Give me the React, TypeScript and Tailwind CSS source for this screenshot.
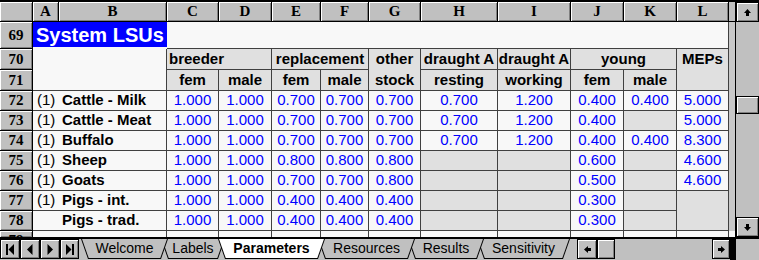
import React from 'react';

type Row = { n: number; p: boolean; name: string; v: (string | null)[]; lMerge?: boolean; lSkip?: boolean };

const rows: Row[] = [
  { n: 72, p: true, name: 'Cattle - Milk', v: ['1.000', '1.000', '0.700', '0.700', '0.700', '0.700', '1.200', '0.400', '0.400', '5.000'] },
  { n: 73, p: true, name: 'Cattle - Meat', v: ['1.000', '1.000', '0.700', '0.700', '0.700', '0.700', '1.200', '0.400', null, '5.000'] },
  { n: 74, p: true, name: 'Buffalo', v: ['1.000', '1.000', '0.700', '0.700', '0.700', '0.700', '1.200', '0.400', '0.400', '8.300'] },
  { n: 75, p: true, name: 'Sheep', v: ['1.000', '1.000', '0.800', '0.800', '0.800', null, null, '0.600', null, '4.600'] },
  { n: 76, p: true, name: 'Goats', v: ['1.000', '1.000', '0.700', '0.700', '0.800', null, null, '0.500', null, '4.600'] },
  { n: 77, p: true, name: 'Pigs - int.', v: ['1.000', '1.000', '0.400', '0.400', '0.400', null, null, '0.300', null], lMerge: true },
  { n: 78, p: false, name: 'Pigs - trad.', v: ['1.000', '1.000', '0.400', '0.400', '0.400', null, null, '0.300', null], lSkip: true },
];

const letters = ['A', 'B', 'C', 'D', 'E', 'F', 'G', 'H', 'I', 'J', 'K', 'L'];

const hdr =
  'bg-[#c0c0c0] border-r border-b border-black shadow-[inset_1px_1px_0_#ffffff,inset_-1px_-1px_0_#808080] flex items-center justify-center font-bold text-[15px] font-["Liberation_Serif",serif] text-black';
const numCell =
  'bg-[#f8f8f8] border-r border-b border-[#404040] flex items-center justify-center text-[#0000ff] text-[15px]';
const grayCell = 'bg-[#e0e0e0] border-r border-b border-[#404040]';
const label = 'bg-[#e0e0e0] border-r border-b border-[#404040] flex items-center font-bold text-[15px]';

const Arrow = ({ dir }: { dir: 'up' | 'down' | 'left' | 'right' }) => {
  const rot = { up: 0, right: 90, down: 180, left: 270 }[dir];
  return (
    <svg width="9" height="9" viewBox="0 0 9 9">
      <path d="M4.5 1 L8 5 H6 V8 H3 V5 H1 Z" fill="#000" transform={`rotate(${rot} 4.5 4.5)`} />
    </svg>
  );
};

const NavIcon = ({ kind }: { kind: 'first' | 'prev' | 'next' | 'last' }) => (
  <svg width="10" height="11" viewBox="0 0 10 11">
    {kind === 'first' && (
      <>
        <rect x="1" y="0" width="2" height="11" fill="#000" />
        <path d="M9 0 V11 L3.5 5.5 Z" fill="#000" />
      </>
    )}
    {kind === 'prev' && <path d="M7.5 0 V11 L2 5.5 Z" fill="#000" />}
    {kind === 'next' && <path d="M2.5 0 V11 L8 5.5 Z" fill="#000" />}
    {kind === 'last' && (
      <>
        <path d="M1 0 V11 L6.5 5.5 Z" fill="#000" />
        <rect x="7" y="0" width="2" height="11" fill="#000" />
      </>
    )}
  </svg>
);

const btn =
  'h-[20px] border border-black bg-[#c0c0c0] shadow-[inset_1px_1px_0_#ffffff,inset_-1px_-1px_0_#808080] flex items-center justify-center';

const tabs = [
  { label: 'Welcome', cls: 'w-[87px] z-[6]' },
  { label: 'Labels', cls: 'w-[64px] z-[5] -ml-[7px]' },
  { label: 'Parameters', cls: 'w-[107px] z-[10] -ml-[7px]', active: true },
  { label: 'Resources', cls: 'w-[97px] z-[4] -ml-[7px]' },
  { label: 'Results', cls: 'w-[76px] z-[3] -ml-[7px]' },
  { label: 'Sensitivity', cls: 'w-[93px] z-[2] -ml-[7px]' },
];

export default function App() {
  return (
    <div className="w-[759px] h-[260px] overflow-hidden bg-[#c0c0c0] border-t-2 border-black flex flex-col font-['Liberation_Sans',Arial,sans-serif] text-black">
      <div className="flex h-[235px]">
        <div className="grid grid-cols-[33px_26px_108px_52px_53px_49px_48px_52px_77px_73px_53px_53px_52px] grid-rows-[20px_27px_21px_21px_20px_20px_20px_20px_20px_20px_20px_6px] w-[729px] bg-[#f8f8f8]">
          {/* column letters */}
          <div className={hdr} />
          {letters.map((l) => (
            <div key={l} className={hdr}>
              {l}
            </div>
          ))}

          {/* row 69 */}
          <div className={hdr}>69</div>
          <div className="col-span-2 bg-[#f8f8f8] pb-[2px]">
            <div className="h-full bg-[#0000ff] text-white font-bold text-[20px] leading-none flex items-center pl-[3px]">
              System LSUs
            </div>
          </div>
          <div className="col-span-10 bg-[#f8f8f8] border-r border-b border-[#404040]" />

          {/* row 70 */}
          <div className={hdr}>70</div>
          <div className="col-span-2 row-span-2 bg-[#f8f8f8] border-r border-b border-[#404040]" />
          <div className={`${label} col-span-2 pl-[2px]`}>breeder</div>
          <div className={`${label} col-span-2 justify-center`}>replacement</div>
          <div className="row-span-2 bg-[#e0e0e0] border-r border-b border-[#404040] flex flex-col font-bold text-[15px]">
            <div className="h-[21px] flex items-center justify-center">other</div>
            <div className="h-[20px] flex items-center justify-center">stock</div>
          </div>
          <div className={`${label} justify-center`}>draught A</div>
          <div className={`${label} justify-center`}>draught A</div>
          <div className={`${label} col-span-2 justify-center`}>young</div>
          <div className="row-span-2 bg-[#e0e0e0] border-r border-b border-[#404040] flex flex-col font-bold text-[15px]">
            <div className="h-[21px] flex items-center justify-center">MEPs</div>
          </div>

          {/* row 71 */}
          <div className={hdr}>71</div>
          <div className={`${label} justify-center`}>fem</div>
          <div className={`${label} justify-center`}>male</div>
          <div className={`${label} justify-center`}>fem</div>
          <div className={`${label} justify-center`}>male</div>
          <div className={`${label} justify-center`}>resting</div>
          <div className={`${label} justify-center`}>working</div>
          <div className={`${label} justify-center`}>fem</div>
          <div className={`${label} justify-center`}>male</div>

          {rows.map((r) => (
            <React.Fragment key={r.n}>
              <div className={hdr}>{r.n}</div>
              <div className="col-span-2 bg-[#f8f8f8] border-r border-b border-[#404040] flex items-center pl-[4px] text-[15px] whitespace-nowrap">
                <span className="inline-block w-[25px]">{r.p ? '(1)' : ''}</span>
                <span className="font-bold">{r.name}</span>
              </div>
              {r.v.map((v, i) =>
                v === null ? (
                  <div key={i} className={grayCell} />
                ) : (
                  <div key={i} className={numCell}>
                    {v}
                  </div>
                )
              )}
              {r.lMerge && <div className={`${grayCell} row-span-2`} />}
            </React.Fragment>
          ))}

          {/* row 79 (cut off) */}
          <div className={`${hdr} items-start overflow-hidden border-b-0`}>
            <span className="leading-none pt-[2px]">79</span>
          </div>
          <div className="col-span-2 bg-[#f8f8f8] border-r border-[#404040]" />
          {Array.from({ length: 10 }).map((_, i) => (
            <div key={i} className="bg-[#f8f8f8] border-r border-[#404040]" />
          ))}
        </div>

        {/* partial column M */}
        <div className="w-[6px] flex flex-col">
          <div className="h-[20px] bg-[#c0c0c0] border-b border-black" />
          <div className="flex-1 bg-[#c8c8c8]" />
          <div className="h-[6px] bg-[#f8f8f8]" />
        </div>
        <div className="w-[1px] bg-black" />

        {/* vertical scrollbar */}
        <div className="w-[23px] flex flex-col bg-[#c0c0c0]">
          <div className={`${btn} h-[19px]`}>
            <Arrow dir="up" />
          </div>
          <div className="flex-1 flex flex-col">
            <div className="h-[74px]" />
            <div className="h-[18px] border border-black bg-[#c0c0c0] shadow-[inset_1px_1px_0_#ffffff,inset_-1px_-1px_0_#808080]" />
          </div>
          <div className={`${btn} h-[19px]`}>
            <Arrow dir="down" />
          </div>
        </div>
      </div>

      {/* sheet tabs bar */}
      <div className="h-[23px] border-t-2 border-black flex items-start">
        <div className="flex">
          <div className={`${btn} w-[20px]`}>
            <NavIcon kind="first" />
          </div>
          <div className={`${btn} w-[20px]`}>
            <NavIcon kind="prev" />
          </div>
          <div className={`${btn} w-[20px]`}>
            <NavIcon kind="next" />
          </div>
          <div className={`${btn} w-[19px]`}>
            <NavIcon kind="last" />
          </div>
        </div>

        <div className="flex ml-[2px]">
          {tabs.map((t) => (
            <div key={t.label} className={`relative h-[20px] ${t.cls}`}>
              <div className="absolute inset-0 bg-black [clip-path:polygon(0_0,100%_0,calc(100%_-_7px)_100%,7px_100%)]" />
              <div
                className={`absolute inset-0 ${
                  t.active ? 'bg-white' : 'bg-[#c0c0c0]'
                } [clip-path:polygon(1px_0,calc(100%_-_1px)_0,calc(100%_-_7.7px)_calc(100%_-_1px),7.7px_calc(100%_-_1px))]`}
              />
              <div
                className={`relative h-full flex items-center justify-center text-[14px] pb-[1px] ${
                  t.active ? 'font-bold' : ''
                }`}
              >
                {t.label}
              </div>
            </div>
          ))}
        </div>

        {/* horizontal scrollbar */}
        <div className="flex ml-[7px]">
          <div className={`${btn} w-[20px]`}>
            <Arrow dir="left" />
          </div>
          <div className={`${btn} w-[18px]`} />
          <div className="w-[97px] h-[20px] bg-[#c0c0c0]" />
          <div className={`${btn} w-[18px]`}>
            <Arrow dir="right" />
          </div>
        </div>
        <div className="w-[6px] h-full bg-black" />
        <div className="flex-1 h-full bg-[#c0c0c0]" />
      </div>
    </div>
  );
}
